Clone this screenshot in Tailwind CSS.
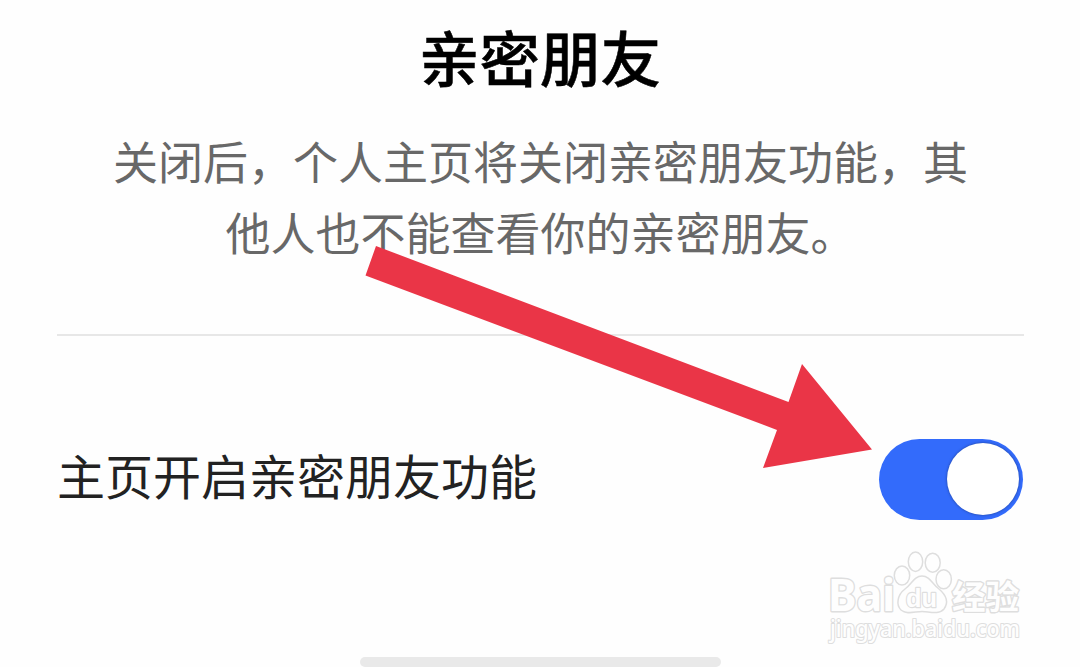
<!DOCTYPE html>
<html lang="zh-CN">
<head>
<meta charset="utf-8">
<title>亲密朋友</title>
<script src="https://cdn.jsdelivr.net/npm/@tailwindcss/browser@4"></script>
</head>
<body class="bg-[#fefefe] font-['Noto_Sans_CJK_SC',sans-serif]">
<main class="relative flex h-[667px] w-[1080px] flex-col overflow-hidden px-[57px]">
  <h1 class="h-[125px] text-center text-[60.5px] leading-[111px] font-medium text-black [-webkit-text-stroke:0.5px_black]">亲密朋友</h1>
  <p class="h-[142px] pl-px text-center text-[45px] leading-[71px] font-normal text-[#686868]">关闭后，个人主页将关闭亲密朋友功能，其<br>他人也不能查看你的亲密朋友。</p>
  <div class="mt-[67px] h-[2px] w-[967px] shrink-0 bg-[#e7e7e7]"></div>
  <div class="mt-[102px] flex h-[82px] w-[966px] items-center justify-between">
    <span class="pb-[9px] text-[48px] leading-[73px] text-[#222222]">主页开启亲密朋友功能</span>
    <button role="switch" aria-checked="true" aria-label="主页开启亲密朋友功能" class="flex h-[81px] w-[144px] items-center justify-end rounded-full bg-[#336bfb] pr-[4px]">
      <span class="size-[72px] rounded-full bg-white shadow-[0_0_3px_rgba(0,0,0,0.4)]"></span>
    </button>
  </div>
  <div class="mt-auto h-[10px] w-[361px] self-center rounded-full bg-[#e9e9e9]"></div>

  <svg class="pointer-events-none absolute inset-0" width="1080" height="667" viewBox="0 0 1080 667" aria-hidden="true">
    <path d="M376 246 L788.500 402 L802 364 L872 449.500 L763 468 L777 430 L365.500 275.500 Z" fill="#ea3547"/>
    <g fill="#fefefe" stroke="#dedede" stroke-width="1.500" stroke-linejoin="round">
      <text x="828" y="611" font-size="44" font-family="Noto Sans, sans-serif" font-weight="700" paint-order="stroke" stroke-width="2.800" textLength="67" lengthAdjust="spacingAndGlyphs">Bai</text>
      <ellipse cx="902" cy="575.500" rx="7.700" ry="9.500"/>
      <ellipse cx="915.500" cy="561.700" rx="7.200" ry="9.700"/>
      <ellipse cx="932.700" cy="562.800" rx="7.500" ry="9.500"/>
      <ellipse cx="943.700" cy="579.300" rx="7.700" ry="9.500"/>
      <path d="M922 576 C914 576 912 584 905 589 C897 595 896 605 901 610 C907 615 915 611.500 922 611.500 C929 611.500 939 615 944 609 C949 602 946 595 939 589 C932 584 930 576 922 576 Z"/>
      <text x="906" y="607" font-size="26" font-weight="700" stroke-width="2.400" paint-order="stroke" font-family="Liberation Sans, Arial, sans-serif" textLength="31" lengthAdjust="spacingAndGlyphs">du</text>
      <text x="952" y="608.500" font-size="33" font-weight="700" paint-order="stroke" stroke-width="2.800" font-family="Noto Sans CJK SC, sans-serif" textLength="67" lengthAdjust="spacingAndGlyphs">经验</text>
      <text x="830" y="637" font-size="23" font-weight="500" paint-order="stroke" stroke-width="2.200" font-family="Noto Sans, sans-serif" textLength="190" lengthAdjust="spacingAndGlyphs">jingyan.baidu.com</text>
    </g>
  </svg>
</main>
</body>
</html>
